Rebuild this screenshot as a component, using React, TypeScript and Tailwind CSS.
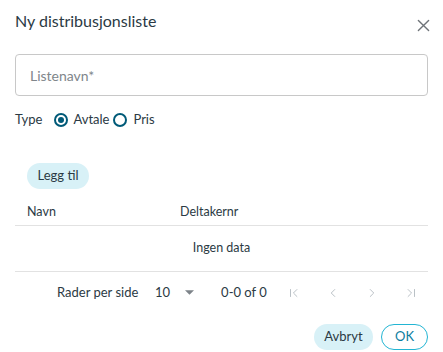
import React, { useState } from 'react';

const font = { fontFamily: 'Lato, "Noto Sans", sans-serif' };

const PagerIcon: React.FC<{ d: string }> = ({ d }) => (
  <svg className="w-[14px] h-[14px] text-[#b5bcc2] shrink-0" viewBox="0 0 24 24" fill="none" stroke="currentColor" strokeWidth={1.6} strokeLinecap="round" strokeLinejoin="round">
    <path d={d} />
  </svg>
);

export default function App() {
  const [type, setType] = useState<'avtale' | 'pris'>('avtale');

  return (
    <div className="w-[443px] h-[352px] bg-white px-[15px] text-[#2b3a44] overflow-hidden whitespace-nowrap" style={font}>
      {/* Header */}
      <div className="flex items-center justify-between h-[42px]">
        <h2 className="text-[16px] leading-none">Ny distribusjonsliste</h2>
        <button className="-mr-[2px] mt-[9px] text-[#6f7479]">
          <svg className="w-[13px] h-[13px]" viewBox="0 0 14 14" stroke="currentColor" strokeWidth={1.5} strokeLinecap="round">
            <path d="M1.5 1.5l11 11M12.5 1.5l-11 11" />
          </svg>
        </button>
      </div>

      {/* Name input */}
      <div className="mt-[12px] h-[42px] border border-[#c8c8c8] rounded-[4px] flex items-center px-[14px]">
        <input
          className="w-full outline-none text-[14px] placeholder:text-[#80868b]"
          placeholder="Listenavn*"
        />
      </div>

      {/* Type */}
      <div className="flex items-center h-[28px] mt-[10px] text-[13px]">
        <span className="mr-[12px]">Type</span>
        <label className="flex items-center cursor-pointer" onClick={() => setType('avtale')}>
          <span className="w-[14px] h-[14px] rounded-full border-2 border-[#005a78] flex items-center justify-center">
            {type === 'avtale' && <span className="w-[6px] h-[6px] rounded-full bg-[#005a78]" />}
          </span>
          <span className="ml-[5px]">Avtale</span>
        </label>
        <label className="flex items-center cursor-pointer ml-[4px]" onClick={() => setType('pris')}>
          <span className="w-[14px] h-[14px] rounded-full border-2 border-[#005a78] flex items-center justify-center">
            {type === 'pris' && <span className="w-[6px] h-[6px] rounded-full bg-[#005a78]" />}
          </span>
          <span className="ml-[6px]">Pris</span>
        </label>
      </div>

      {/* Add button */}
      <div className="mt-[28px] pl-[12px]">
        <button className="h-[26px] w-[62px] rounded-full bg-[#d8f1f7] text-[13px] text-[#2b3a44]">Legg til</button>
      </div>

      {/* Table */}
      <div className="mt-[11px]">
        <div className="flex items-center h-[26px] border-b border-[#e2e2e2] text-[12.5px] pl-[12px]">
          <span className="w-[153px]">Navn</span>
          <span>Deltakernr</span>
        </div>
        <div className="h-[46px] flex items-center justify-center text-[12.5px] border-b border-[#e2e2e2]">
          Ingen data
        </div>
        <div className="h-[42px] flex items-center text-[13px]">
          <span className="ml-[42px] w-[71px] shrink-0">Rader per side</span>
          <span className="ml-[27px]">10</span>
          <svg className="ml-[15px] w-[9px] h-[5px] text-[#7d8389] shrink-0" viewBox="0 0 10 5" fill="currentColor">
            <path d="M0 0h10L5 5z" />
          </svg>
          <span className="ml-[27px] w-[40px] shrink-0">0-0 of 0</span>
          <div className="ml-[26px] flex items-center gap-[25px]">
            <PagerIcon d="M6 6v12M17 6l-6 6 6 6" />
            <PagerIcon d="M15 6l-6 6 6 6" />
            <PagerIcon d="M9 6l6 6-6 6" />
            <PagerIcon d="M7 6l6 6-6 6M18 6v12" />
          </div>
        </div>
      </div>

      {/* Footer */}
      <div className="flex justify-end gap-[8px] mt-[10px]">
        <button className="h-[26px] w-[59px] rounded-full bg-[#d8f1f7] text-[13px] text-[#2b3a44]">Avbryt</button>
        <button className="h-[26px] w-[47px] rounded-full border-[1.5px] border-[#22b5d3] text-[13px] text-[#0a7da0]">OK</button>
      </div>
    </div>
  );
}
